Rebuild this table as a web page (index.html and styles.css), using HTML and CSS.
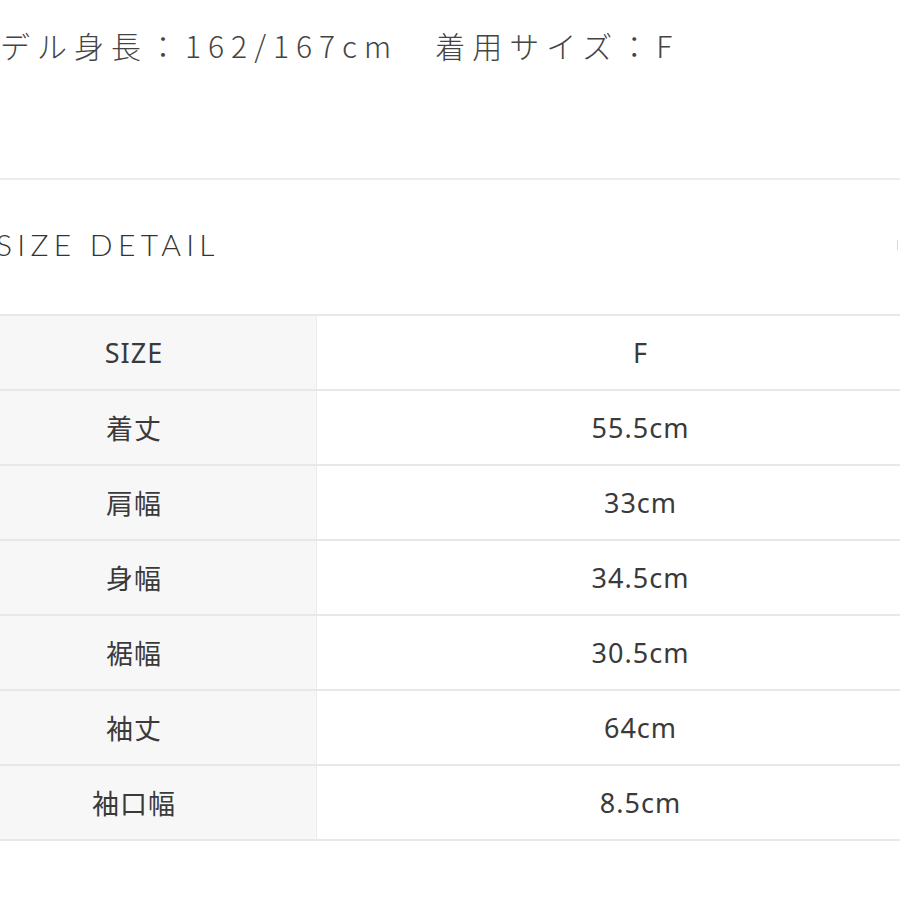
FILE: index.html
```html
<!DOCTYPE html>
<html lang="ja">
<head>
<meta charset="utf-8">
<link rel="stylesheet" href="styles.css">
</head>
<body>
<div class="page">
  <p class="model">モデル身長：162/167cm　着用サイズ：F</p>
  <section class="detail">
    <h2 class="title">SIZE DETAIL</h2>
    <span class="toggle"></span>
  </section>
  <table class="size-table">
    <tr><th>SIZE</th><td>F</td></tr>
    <tr><th>着丈</th><td>55.5cm</td></tr>
    <tr><th>肩幅</th><td>33cm</td></tr>
    <tr><th>身幅</th><td>34.5cm</td></tr>
    <tr><th>裾幅</th><td>30.5cm</td></tr>
    <tr><th>袖丈</th><td>64cm</td></tr>
    <tr><th>袖口幅</th><td>8.5cm</td></tr>
  </table>
</div>
</body>
</html>
```

FILE: styles.css
```css
html, body {
  margin: 0;
  padding: 0;
  background: #ffffff;
  overflow: hidden;
}

.page {
  width: 900px;
  height: 900px;
  overflow: hidden;
  position: relative;
  font-family: "Noto Sans", "Noto Sans CJK JP", sans-serif;
  color: #333333;
}

.model {
  margin: 0 0 0 -37px;
  height: 178px;
  padding-top: 25px;
  box-sizing: border-box;
  font-family: "Noto Sans CJK JP", sans-serif;
  font-weight: 300;
  font-size: 30px;
  line-height: 40px;
  letter-spacing: 7px;
  white-space: nowrap;
  color: #444444;
}

.detail {
  border-top: 2px solid #ececec;
  height: 134px;
  display: flex;
  align-items: center;
  position: relative;
}

.title {
  margin: 0 0 0 -4px;
  font-family: "Lato", sans-serif;
  font-weight: 300;
  font-size: 30px;
  letter-spacing: 5.3px;
  line-height: 1;
  color: #333333;
  padding-bottom: 6px;
  white-space: nowrap;
}

.toggle {
  position: absolute;
  left: 897px;
  top: 60px;
  width: 10px;
  height: 10px;
  border-left: 1px solid #d8d8d8;
}

.size-table {
  margin-left: -48px;
  width: 1012px;
  border-collapse: collapse;
  table-layout: fixed;
}

.size-table th,
.size-table td {
  height: 73px;
  border-top: 2px solid #e8e8e8;
  border-bottom: 2px solid #e8e8e8;
  text-align: center;
  vertical-align: middle;
  font-size: 27px;
  font-weight: 400;
  letter-spacing: 1px;
  color: #3a3a3a;
  padding: 0;
}

.size-table th {
  width: 364px;
  background: #f7f7f7;
  border-right: 1px solid #ececec;
  font-family: "Noto Sans", "Noto Sans CJK JP", sans-serif;
}

.size-table td {
  background: #ffffff;
}
```
